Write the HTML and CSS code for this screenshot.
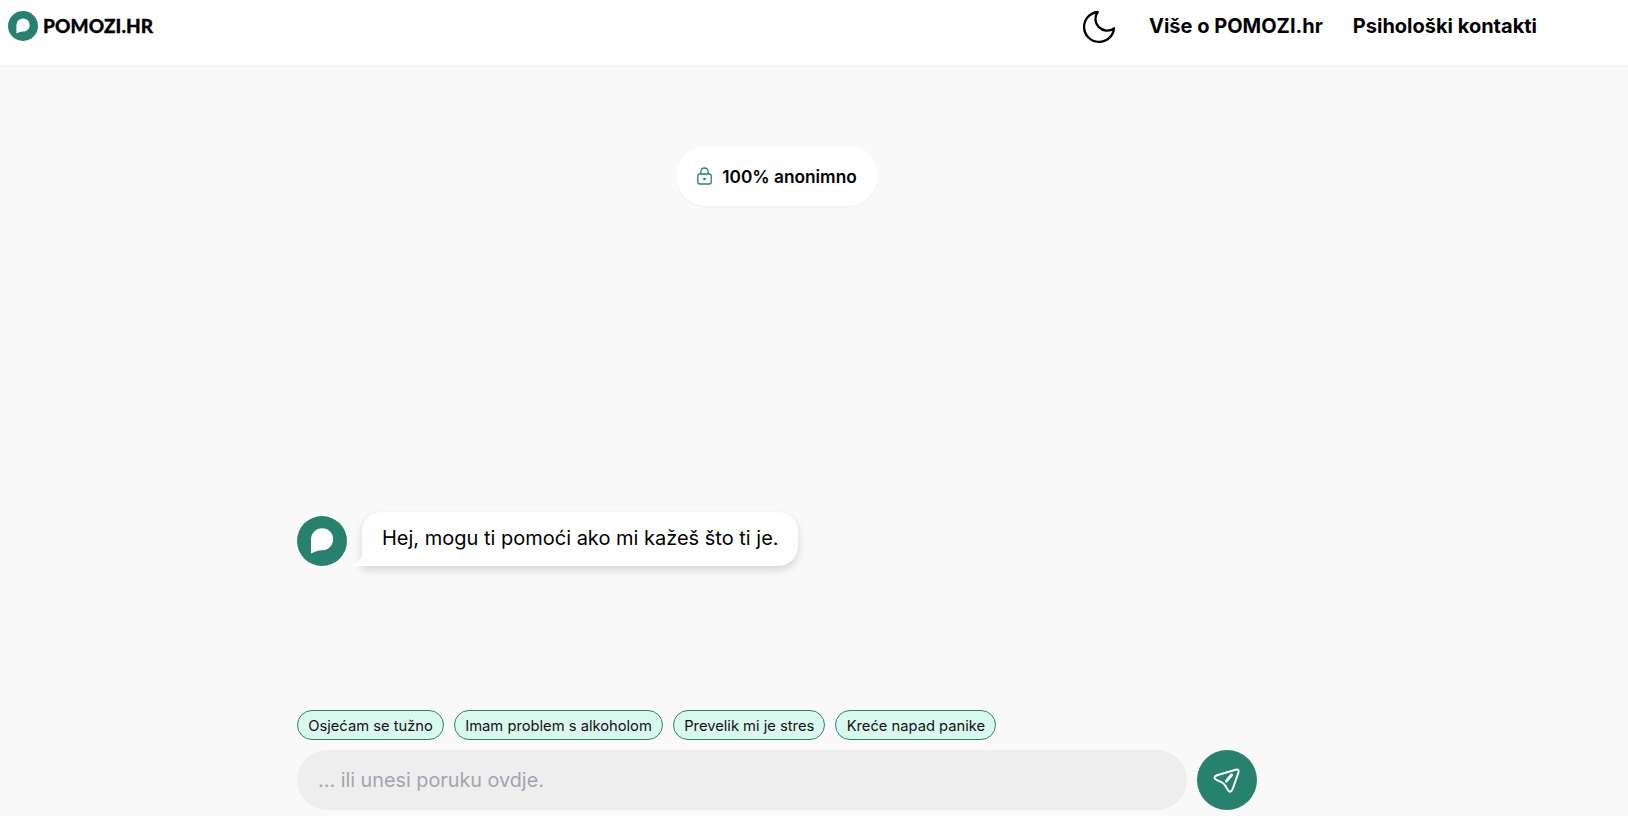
FILE: index.html
```html
<!DOCTYPE html>
<html lang="hr">
<head>
<meta charset="utf-8">
<title>POMOZI.hr</title>
<link rel="stylesheet" href="styles.css">
</head>
<body>
<header class="topbar">
  <a class="brand" href="#">
    <svg class="brand-mark" viewBox="0 0 50 50" aria-hidden="true"><circle cx="25" cy="25" r="25" fill="#26826f"/><path d="M25.200 12.300a11 11 0 0 1 0 22C21 34.300 18 36 14 37.500V23.300A11.200 11 0 0 1 25.200 12.300Z" fill="#fff"/></svg>
    <span class="brand-name">POMOZI.HR</span>
  </a>
  <nav class="nav">
    <svg class="moon" viewBox="0 0 24 24" aria-hidden="true"><path d="M21 12.790A9 9 0 1 1 11.210 3 7 7 0 0 0 21 12.790z"/></svg>
    <a class="nav-link" href="#">Više o POMOZI.hr</a>
    <a class="nav-link" href="#">Psihološki kontakti</a>
  </nav>
</header>
<main class="chat">
  <div class="badge">
    <svg class="lock" viewBox="2.500 1 15 18" aria-hidden="true"><rect x="3.300" y="8" width="13.400" height="10" rx="2"/><path d="M6.300 8V5.700a3.700 3.700 0 0 1 7.400 0V8"/><circle cx="10" cy="13" r=".7"/></svg>
    <span>100% anonimno</span>
  </div>
  <div class="message">
    <svg class="avatar" viewBox="0 0 50 50" aria-hidden="true"><circle cx="25" cy="25" r="25" fill="#26826f"/><path d="M25.200 12.300a11 11 0 0 1 0 22C21 34.300 18 36 14 37.500V23.300A11.200 11 0 0 1 25.200 12.300Z" fill="#fff"/></svg>
    <p class="bubble">Hej, mogu ti pomoći ako mi kažeš što ti je.</p>
  </div>
  <div class="chips">
    <button class="chip">Osjećam se tužno</button>
    <button class="chip">Imam problem s alkoholom</button>
    <button class="chip">Prevelik mi je stres</button>
    <button class="chip">Kreće napad panike</button>
  </div>
  <form class="composer">
    <input class="field" type="text" placeholder="... ili unesi poruku ovdje.">
    <button class="send" type="button" aria-label="Pošalji">
      <svg viewBox="0 0 32 32" aria-hidden="true"><path class="plane" d="M24.500 5.700C27 4.900 28.200 6.200 27.400 8.600L22 24C20.600 28.200 18.300 28.600 16.800 26L14.200 21.500C13.200 19.800 12 19 10.300 18.200L6 16.200C2.600 14.600 2.700 12.400 6 11.200Z"/><path class="plane-line" d="M15.500 17L20.500 11"/></svg>
    </button>
  </form>
</main>
</body>
</html>
```
FILE: styles.css
```css
* { box-sizing: border-box; }
html, body { margin: 0; height: 100%; }
body {
  display: flex;
  flex-direction: column;
  height: 816px;
  overflow: hidden;
  background: #f9f9f9;
  color: #000;
  font-family: Inter, "Liberation Sans", sans-serif;
}
.topbar {
  flex: none;
  display: flex;
  justify-content: space-between;
  height: 67px;
  padding: 11px 91px 0 8px;
  background: #fff;
  border-bottom: 1px solid #f0f0f0;
}
.brand {
  display: flex;
  align-items: flex-start;
  gap: 5px;
  color: #000;
  text-decoration: none;
}
.brand-mark { width: 30px; height: 30px; }
.brand-name {
  font-family: Lato, sans-serif;
  font-weight: 900;
  font-size: 19px;
  letter-spacing: .1px;
  line-height: 30px;
  -webkit-text-stroke: .3px #000;
}
.nav {
  display: flex;
  align-items: flex-start;
  gap: 30px;
}
.moon {
  width: 40px;
  height: 40px;
  margin: -4px 0 0 0;
  fill: none;
  stroke: #000;
  stroke-width: 1.4;
  stroke-linejoin: round;
}
.nav-link {
  margin-top: 2px;
  color: #000;
  font-size: 20px;
  font-weight: 700;
  line-height: 26px;
  text-decoration: none;
}
.chat {
  flex: 1;
  width: 960px;
  margin-left: 297px;
  display: flex;
  flex-direction: column;
  padding-bottom: 6px;
}
.badge {
  align-self: center;
  display: flex;
  align-items: center;
  gap: 10px;
  height: 60px;
  margin-top: 79px;
  padding: 0 21px;
  background: #fff;
  border-radius: 30px;
  box-shadow: 0 1px 2px rgba(0, 0, 0, .05);
  font-size: 17.280px;
  font-weight: 600;
}
.lock {
  width: 15px;
  height: 18px;
  fill: none;
  stroke: #26826f;
  stroke-width: 1.300;
}
.message {
  display: flex;
  align-items: flex-end;
  gap: 15px;
  margin-top: auto;
  margin-bottom: 144px;
}
.avatar { flex: none; width: 50px; height: 50px; }
.bubble {
  position: relative;
  margin: 0;
  padding: 12px 19px 14px 20px;
  background: #fff;
  border-radius: 20px 20px 20px 0;
  box-shadow: 0 4px 8px rgba(0, 0, 0, .15);
  font-size: 20px;
  line-height: 28px;
}
.bubble::before {
  content: "";
  position: absolute;
  left: -14px;
  bottom: 0;
  width: 14px;
  height: 14px;
  background: radial-gradient(circle at 0 0, transparent 14px, #fff 14.500px);
}
.chips {
  display: flex;
  gap: 10px;
  margin-bottom: 10px;
}
.chip {
  height: 30px;
  padding: 1px 10.200px 0;
  background: #d9f9ee;
  border: 1px solid #26826f;
  border-radius: 15px;
  color: #111;
  font-family: inherit;
  font-size: 14.720px;
}
.composer {
  display: flex;
  gap: 10px;
}
.field {
  flex: 1;
  height: 60px;
  padding: 0 21px;
  background: #eee;
  border: 0;
  border-radius: 30px;
  font-family: inherit;
  font-size: 19.800px;
}
.field::placeholder { color: #a3a3b0; opacity: 1; }
.send {
  flex: none;
  display: flex;
  align-items: center;
  justify-content: center;
  width: 60px;
  height: 60px;
  padding: 0;
  background: #26826f;
  border: 0;
  border-radius: 50%;
}
.send svg { width: 32px; height: 32px; }
.plane { fill: none; stroke: #fff; stroke-width: 2; stroke-linejoin: round; }
.plane-line { fill: none; stroke: #fff; stroke-width: 3; stroke-linecap: round; }
```
